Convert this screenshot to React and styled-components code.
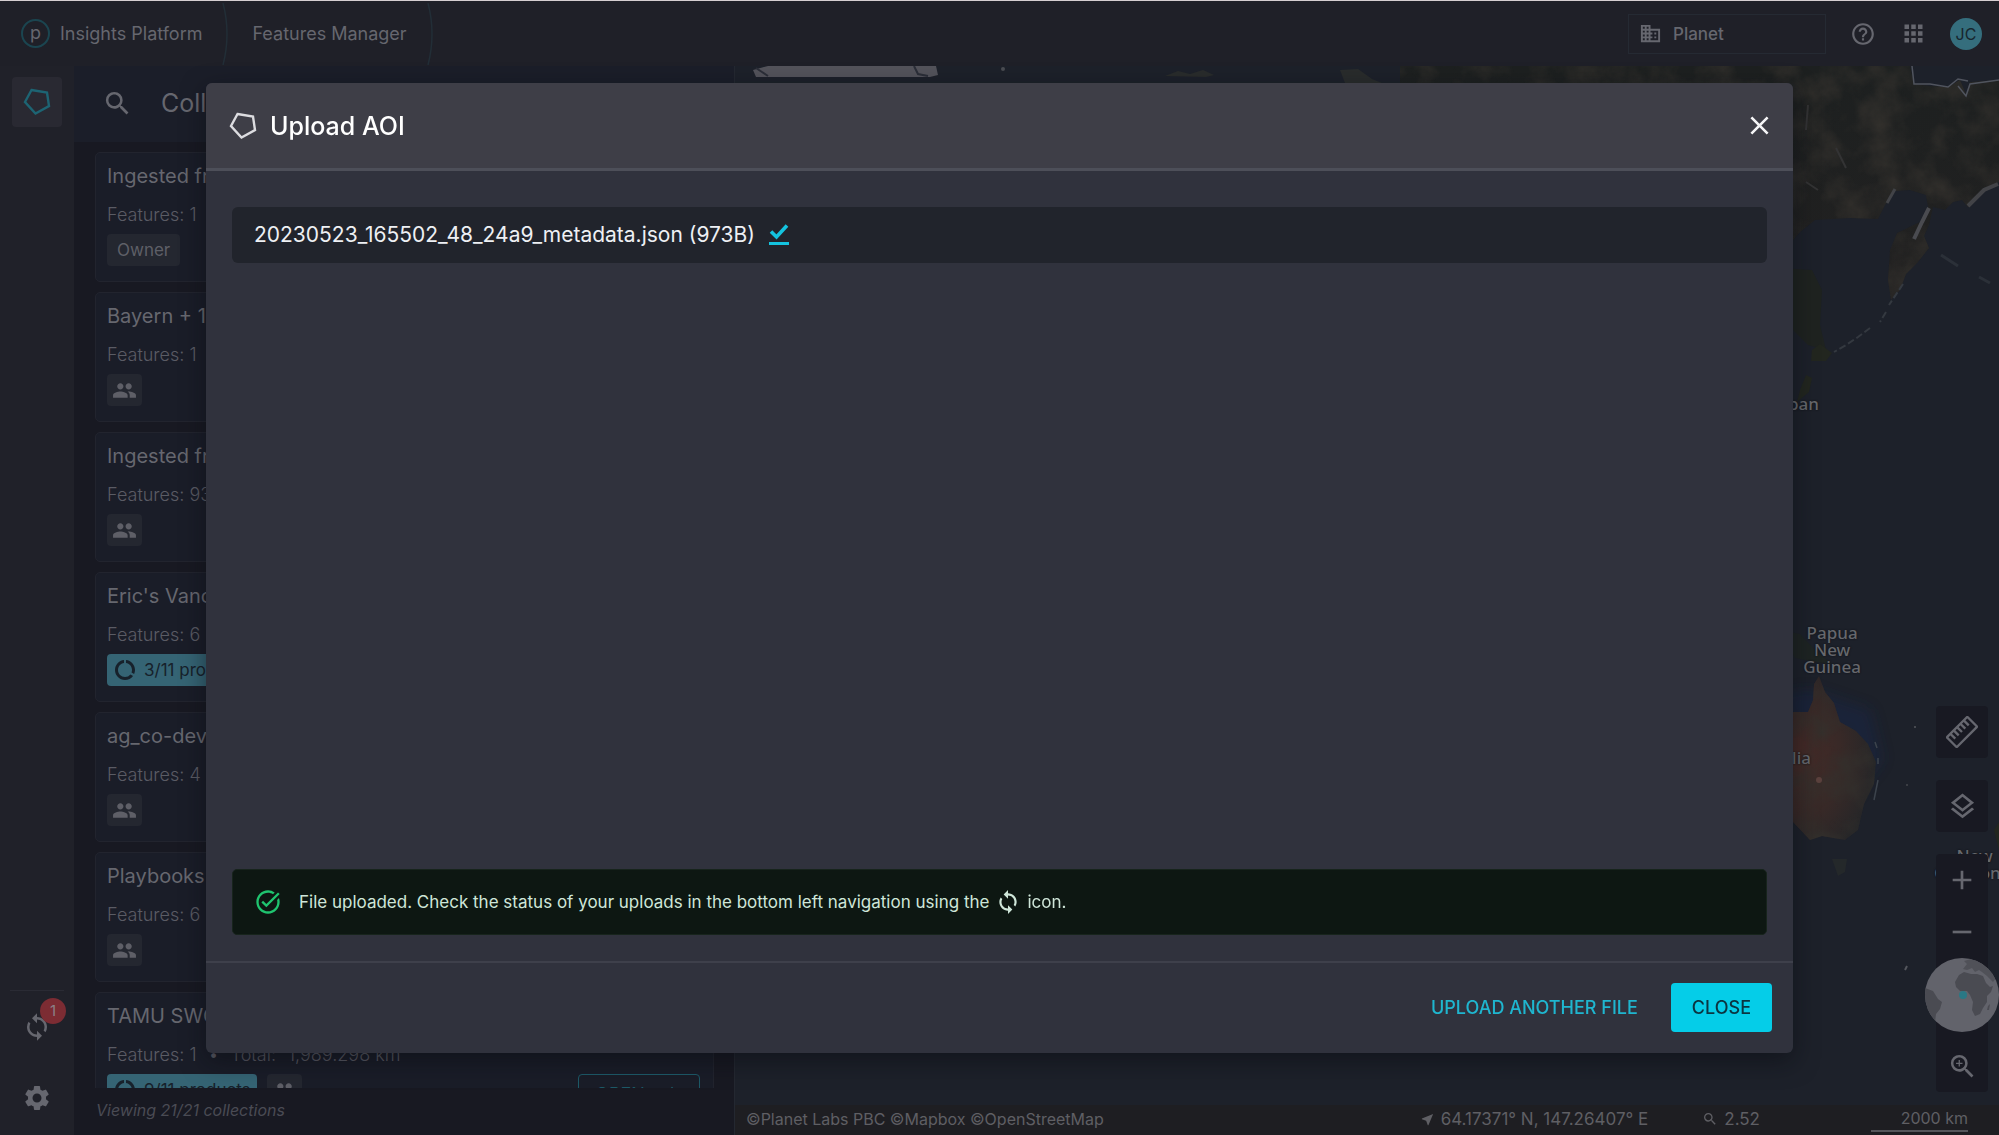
import React from "react";
import styled, { createGlobalStyle } from "styled-components";
import {
  MdAdd,
  MdApps,
  MdArrowForward,
  MdClose,
  MdDataUsage,
  MdDomain,
  MdHelpOutline,
  MdNearMe,
  MdOutlineLayers,
  MdPeople,
  MdRemove,
  MdSearch,
  MdSettings,
  MdSync,
  MdTaskAlt,
  MdZoomIn,
} from "react-icons/md";

const color = {
  bar: "#1f2028",
  rail: "#202129",
  panel: "#181922",
  card: "#1a1d28",
  cardBorder: "#22242e",
  chip: "#242730",
  muted: "#4a4b54",
  text: "#66676f",
  tealDim: "#1d5a68",
  tealChip: "#356474",
  ocean: "#1d212a",
  modal: "#30323d",
  modalHead: "#3e3e47",
  line: "#4d4f59",
  cyan: "#05cde8",
};

const GlobalStyle = createGlobalStyle`
  * {
    box-sizing: border-box;
  }
  body {
    margin: 0;
    background: ${color.panel};
    font-family: Inter, "Liberation Sans", sans-serif;
    color: ${color.text};
  }
  button {
    font-family: inherit;
    cursor: pointer;
  }
  h1, h2, p, ul {
    margin: 0;
    padding: 0;
    font-weight: 400;
  }
  svg {
    display: block;
    flex: none;
  }
`;

const Page = styled.div`
  display: flex;
  flex-direction: column;
  height: 100vh;
  overflow: hidden;
`;

/* top bar */

const TopBar = styled.header`
  display: flex;
  align-items: center;
  justify-content: space-between;
  height: 66px;
  flex: none;
  padding: 0 17px 0 21px;
  background: ${color.bar};
  border-top: 1px solid #d5ced1;
`;

const Group = styled.div`
  display: flex;
  align-items: center;
  gap: ${({ gap }) => gap || 0}px;
`;

const Logo = styled.span`
  display: flex;
  align-items: center;
  justify-content: center;
  width: 29px;
  height: 29px;
  margin-right: 10px;
  border: 2px solid #1b4550;
  border-radius: 50%;
  font-size: 18px;
  line-height: 20px;
  padding-bottom: 2px;
`;

const Crumb = styled.a`
  display: flex;
  align-items: center;
  font-size: 18px;
  line-height: 24px;
  color: ${color.text};
  text-decoration: none;
`;

const CrumbEdge = styled.svg`
  width: 8px;
  height: 62px;
  margin: 0 22px 0 20px;
`;

const OrgButton = styled.button`
  display: flex;
  align-items: center;
  gap: 11px;
  width: 198px;
  height: 40px;
  padding: 0 10px;
  border: 1px solid #252a33;
  background: none;
  color: ${color.text};
  font-size: 17px;
  font-weight: 500;
`;

const IconButton = styled.button`
  display: flex;
  align-items: center;
  justify-content: center;
  width: ${({ size }) => size || 26}px;
  height: ${({ size }) => size || 26}px;
  padding: 0;
  border: 0;
  border-radius: 4px;
  background: ${({ $active }) => ($active ? "#292932" : "none")};
  color: ${({ tone }) => tone || color.text};
`;

const Avatar = styled.button`
  width: 32px;
  height: 32px;
  padding: 0;
  border: 0;
  border-radius: 50%;
  background: #356e7d;
  color: #17262f;
  font-size: 16px;
`;

/* left rail */

const Main = styled.div`
  display: flex;
  flex: 1;
  min-height: 0;
`;

const Rail = styled.nav`
  display: flex;
  flex-direction: column;
  align-items: center;
  justify-content: space-between;
  width: 74px;
  flex: none;
  padding: 11px 0 22px;
  background: ${color.rail};
`;

const RailBottom = styled.div`
  display: flex;
  flex-direction: column;
  align-items: center;
  gap: 41px;
  width: 54px;
  padding-top: 21px;
  border-top: 1px solid #2a2b34;
`;

const SyncHolder = styled.div`
  position: relative;
`;

const Badge = styled.span`
  position: absolute;
  top: -14px;
  right: -14px;
  width: 26px;
  height: 26px;
  border-radius: 50%;
  background: #7c2c33;
  color: #8b8086;
  font-size: 15px;
  line-height: 26px;
  text-align: center;
`;

/* collections */

const Panel = styled.section`
  display: flex;
  flex-direction: column;
  width: 661px;
  flex: none;
  background: ${color.panel};
  border-right: 1px solid #242831;
`;

const PanelHead = styled.div`
  display: flex;
  align-items: center;
  gap: 28px;
  height: 76px;
  flex: none;
  padding: 0 14px 2px 28px;
  background: #1b1e29;
`;

const PanelTitle = styled.h1`
  flex: 1;
  font-size: 25px;
  line-height: 32px;
`;

const OutlineButton = styled.button`
  display: flex;
  align-items: center;
  justify-content: center;
  gap: 16px;
  width: 122px;
  height: 40px;
  border: 1px solid ${color.tealDim};
  border-radius: 4px;
  background: none;
  color: ${color.tealDim};
  font-size: 18px;
`;

const List = styled.ul`
  display: flex;
  flex-direction: column;
  gap: 10px;
  flex: 1;
  min-height: 0;
  overflow: hidden;
  padding: 10px 20px 0 21px;
  list-style: none;
`;

const Card = styled.li`
  flex: none;
  height: 130px;
  padding: 9px 13px 9px 11px;
  border: 1px solid ${color.cardBorder};
  border-radius: 5px;
  background: ${color.card};
`;

const CardTitle = styled.h2`
  font-size: 20px;
  line-height: 28px;
  white-space: nowrap;
`;

const CardMeta = styled.p`
  display: flex;
  gap: 12px;
  margin-top: 13px;
  font-size: 18px;
  font-weight: 300;
  line-height: 24px;
  color: #5a5b64;
`;

const CardRow = styled.div`
  display: flex;
  align-items: flex-start;
  gap: 10px;
  margin-top: 7px;
`;

const Chip = styled.span`
  display: flex;
  align-items: center;
  gap: 7px;
  height: 32px;
  padding: 0 ${({ $pad }) => $pad}px;
  border-radius: 4px;
  background: ${({ $teal }) => ($teal ? color.tealChip : color.chip)};
  color: ${({ $teal }) => ($teal ? "#17212b" : "#5e5f67")};
  font-size: 17px;
`;

const Spacer = styled.span`
  flex: 1;
`;

const PanelFoot = styled.p`
  height: 47px;
  flex: none;
  padding: 0 22px;
  color: ${color.muted};
  font-size: 16px;
  font-style: italic;
  line-height: 44px;
`;

/* map */

const MapArea = styled.section`
  position: relative;
  display: flex;
  flex-direction: column;
  flex: 1;
  min-width: 0;
  background: ${color.ocean};
`;

const MapCanvas = styled.div`
  flex: 1;
  min-height: 0;
  overflow: hidden;
`;

const MapLabel = styled.span`
  position: absolute;
  top: ${({ top }) => top}px;
  right: ${({ right }) => right}px;
  color: #66686d;
  font-family: "Noto Sans", sans-serif;
  font-size: 17px;
  font-weight: 500;
  line-height: 17px;
  text-align: center;
  text-shadow: 0 0 2px #0b0d12;
`;

const Controls = styled.div`
  position: absolute;
  right: 11px;
  bottom: 43px;
  display: flex;
  flex-direction: column;
  gap: 22px;
`;

const ControlBox = styled.div`
  display: flex;
  flex-direction: column;
  align-items: center;
  width: 52px;
  border-radius: 4px;
  background: #181922;
`;

const Globe = styled.svg`
  width: 74px;
  height: 74px;
  margin: 0 -11px 8px;
`;

const StatusBar = styled.footer`
  display: flex;
  align-items: center;
  height: 30px;
  flex: none;
  padding: 0 31px 2px 11px;
  background: #1e1e22;
  color: #5f5f64;
  font-size: 16px;
  line-height: 24px;
  white-space: nowrap;
`;

const Credits = styled.span`
  flex: 1;
`;

const Reading = styled.span`
  display: flex;
  align-items: center;
  gap: 6px;
  margin-right: ${({ $after }) => $after}px;
  font-size: 17px;
`;

const Scale = styled.span`
  width: 97px;
  border-bottom: 2px solid #55565b;
  text-align: right;
`;

/* dialog */

const Overlay = styled.div`
  position: fixed;
  inset: 0;
  display: flex;
  padding: 83px 206px 82px;
`;

const Dialog = styled.div`
  display: flex;
  flex-direction: column;
  flex: 1;
  overflow: hidden;
  border-radius: 6px;
  background: ${color.modal};
  box-shadow: 0 8px 24px rgba(8, 10, 16, 0.5);
`;

const DialogHead = styled.div`
  display: flex;
  align-items: center;
  gap: 13px;
  height: 88px;
  padding: 0 18px 0 23px;
  border-bottom: 3px solid ${color.line};
  background: ${color.modalHead};
  color: #fff;
`;

const DialogTitle = styled.h2`
  flex: 1;
  font-size: 25px;
  font-weight: 500;
  line-height: 32px;
`;

const DialogBody = styled.div`
  display: flex;
  flex-direction: column;
  justify-content: space-between;
  flex: 1;
  padding: 36px 26px 26px;
`;

const FileRow = styled.div`
  display: flex;
  align-items: center;
  gap: 14px;
  height: 56px;
  padding: 0 22px 2px;
  border-radius: 6px;
  background: #21242c;
  color: #eef0f4;
  font-size: 21px;
`;

const Notice = styled.div`
  display: flex;
  align-items: center;
  height: 66px;
  padding: 0 21px;
  border: 1px solid #17241c;
  border-radius: 5px;
  background: #0d1712;
  color: #cfe6d9;
  font-size: 17px;
  line-height: 24px;
`;

const NoticeText = styled.p`
  display: flex;
  align-items: center;
  gap: 6px;
  margin-left: 17px;
`;

const DialogFoot = styled.div`
  display: flex;
  align-items: center;
  justify-content: flex-end;
  gap: 12px;
  padding: 20px 21px 21px;
  border-top: 2px solid #3e404b;
`;

const Button = styled.button`
  height: 49px;
  padding: 0 21px;
  border: 0;
  border-radius: 4px;
  background: ${({ $primary }) => ($primary ? color.cyan : "none")};
  color: ${({ $primary }) => ($primary ? "#0b3541" : "#1fb6cf")};
  font-size: 18px;
  font-weight: 500;
`;

const collections = [
  { title: "Ingested from", features: "1", owner: true },
  { title: "Bayern + 1", features: "1" },
  { title: "Ingested from", features: "93" },
  { title: "Eric's Vancouver", features: "6", products: "3/11 products" },
  { title: "ag_co-dev", features: "4" },
  { title: "Playbooks", features: "6" },
  {
    title: "TAMU SWOT",
    features: "1",
    total: "1,989.298 km²",
    products: "9/11 products",
    shared: true,
    open: true,
  },
];

const Pentagon = ({ size = 28, stroke = "currentColor" }) => (
  <svg width={size} height={size} viewBox="0 0 28 28" fill="none">
    <path d="M8.500 2 24 4.500 26 18 12.500 25.500 2 14Z" stroke={stroke} strokeWidth="2.400" />
  </svg>
);

const DoneMark = () => (
  <svg width="20" height="24" viewBox="0 0 20 24" fill="none">
    <path d="M2 9.500 7.500 15 18 3.500" stroke="#14c3df" strokeWidth="3.600" />
    <path d="M0 21.500H20" stroke="#14c3df" strokeWidth="3" />
  </svg>
);

const Ruler = () => (
  <svg width="32" height="32" viewBox="0 0 32 32" fill="none">
    <g transform="rotate(-45 16 16)" stroke="currentColor" strokeWidth="2.400">
      <rect x="1.500" y="9" width="29" height="14" rx="1" />
      <path d="M6.500 9v7M11.300 9v7M16 9v7M20.700 9v7M25.500 9v7" />
    </g>
  </svg>
);

const Edge = () => (
  <CrumbEdge viewBox="0 0 8 62" fill="none">
    <path d="M1 0Q9 31 1 62" stroke="#222e37" strokeWidth="1.500" />
  </CrumbEdge>
);

const GlobeIcon = () => (
  <Globe viewBox="0 0 74 74">
    <defs>
      <clipPath id="globe">
        <circle cx="37" cy="37" r="37" />
      </clipPath>
    </defs>
    <g clipPath="url(#globe)">
      <rect width="74" height="74" fill="#62636b" />
      <path
        d="M0 30 8 33 13 41 17 44 15 51 11 56 10 64 0 62Z"
        fill="#4a4b52"
      />
      <path
        d="M34 17 39 14 46 16 52 16 58 18 61 25 65 29 68 28 66 34 62 38 62 44 58 50 55 56 50 58 47 52 48 44 45 37 42 33 35 33 31 29 30 24Z"
        fill="#4a4b52"
      />
      <path
        d="M38 11 42 6 39 3 46 1 56 4 65 11 71 20 68 24 62 18 57 14 54 12 50 14 47 10 42 12Z"
        fill="#505158"
      />
      <path d="M63 48 65 46 64 52 62 52Z" fill="#4a4b52" />
      <circle cx="38" cy="37" r="4" fill="#2a7885" />
    </g>
  </Globe>
);

const MapDrawing = () => (
  <svg
    width="100%"
    height="100%"
    viewBox="735 66 1264 1039"
    preserveAspectRatio="xMaxYMin slice"
  >
    <defs>
      <filter
        id="terrain"
        x="0"
        y="0"
        width="100%"
        height="100%"
        colorInterpolationFilters="sRGB"
      >
        <feTurbulence type="fractalNoise" baseFrequency="0.03" numOctaves="6" seed="8" />
        <feColorMatrix values="0 0 0 0 0.2  0 0 0 0 0.19  0 0 0 0 0.175  1.8 0 0 0 -0.65" />
        <feComposite in2="SourceGraphic" operator="in" result="grain" />
        <feMerge>
          <feMergeNode in="SourceGraphic" />
          <feMergeNode in="grain" />
        </feMerge>
      </filter>
      <filter id="soft" x="-30%" y="-30%" width="160%" height="160%">
        <feGaussianBlur stdDeviation="7" />
      </filter>
      <radialGradient id="outback" cx="0.35" cy="0.5" r="0.65">
        <stop offset="0" stopColor="#472a27" />
        <stop offset="0.55" stopColor="#382927" />
        <stop offset="1" stopColor="#252628" />
      </radialGradient>
      <linearGradient id="asia" x1="0" y1="0" x2="0" y2="1">
        <stop offset="0" stopColor="#1d2020" />
        <stop offset="1" stopColor="#222121" />
      </linearGradient>
    </defs>

    {/* northern ice and islands */}
    <path d="M753 70 768 66H936L938 75 930 77H770L756 77Z" fill="#53535b" />
    <path d="M756 68 768 76M914 66 918 74 928 76" stroke="#2b2e38" strokeWidth="2" fill="none" />
    <circle cx="1003" cy="69" r="2" fill="#4a4c52" />
    <path d="M1165 76 1178 71 1190 74 1203 70 1214 75 1206 77Z" fill="#292c2c" />
    <path d="M1340 70 1358 69 1372 79 1382 83H1345Z" fill="#292c2c" />

    {/* asia */}
    <g filter="url(#terrain)">
      <path
        d="M1400 66H1910L1914 84 1930 86 1948 87 1960 80 1966 94 1970 82 1999 80V182L1985 188 1978 198 1968 207 1962 200 1953 202 1945 210 1933 207 1929 225 1924 236 1929 248 1918 262 1906 274 1900 290 1891 300 1888 280 1890 250 1897 233 1920 222 1928 207 1926 195 1910 190 1895 191 1885 205 1878 219 1850 218 1815 220 1800 232 1793 240H1400Z"
        fill="url(#asia)"
      />
    </g>
    <path d="M1780 268 1812 270 1822 290 1820 325 1826 350 1808 345 1793 330Z" fill="#1f2320" />
    <path d="M1812 350 1820 344 1832 353 1826 361 1811 361Z" fill="#22261f" />
    <path d="M1806 375 1812 378 1809 392 1797 402 1800 390Z" fill="#22261f" />
    <path
      d="M1912 66 1914 84 1930 84 1948 87 1958 79 1968 81M1958 86 1966 96 1970 84 1999 80"
      stroke="#50545e"
      strokeWidth="1.500"
      fill="none"
    />
    <path d="M1929 208 1922 222 1914 239" stroke="#4a4b50" strokeWidth="4" fill="none" />
    <path d="M1998 184 1984 190 1968 206" stroke="#424347" strokeWidth="4" fill="none" />
    <path d="M1895 189 1887 203" stroke="#424347" strokeWidth="3" fill="none" />
    <path d="M1836 148 1846 168M1806 182 1818 190M1808 105 1806 130" stroke="#333334" strokeWidth="2" fill="none" />
    <path
      d="M1903 284 1889 305M1886 312 1880 322M1870 328 1858 337 1846 345 1834 352"
      stroke="#343940"
      strokeWidth="2"
      strokeDasharray="7 3"
      fill="none"
    />
    <path d="M1941 255 1958 266M1979 277 1990 283" stroke="#2b3038" strokeWidth="3" fill="none" />

    {/* australia and new guinea */}
    <path d="M1778 695 1810 690 1870 710 1882 760 1850 800Z" fill="#172750" opacity="0.4" filter="url(#soft)" />
    <g filter="url(#terrain)">
      <path
        d="M1760 712H1808L1813 700 1814 684 1819 676 1825 692 1834 703 1840 722 1856 731 1868 744 1876 762 1874 784 1864 804 1858 830 1845 840 1822 836 1810 840 1793 822H1760Z"
        fill="url(#outback)"
      />
    </g>
    <path d="M1832 859 1847 859 1845 872 1838 876Z" fill="#24282a" />
    <path d="M1780 630 1800 634 1815 650 1832 664 1815 662 1795 658Z" fill="#1e2423" />
    <path d="M1994 830 1999 822V850Z" fill="#22261f" />
    <circle cx="1819" cy="780" r="3" fill="#6a4a46" opacity="0.7" />
    <path d="M1875 742 1877 748M1878 758V764M1878 780 1874 800" stroke="#3c434c" strokeWidth="1.500" fill="none" />
    <circle cx="1915" cy="727" r="1" fill="#54575d" />
    <circle cx="1907" cy="785" r="1" fill="#44474d" />
    <path d="M1905 970 1907 966" stroke="#54575d" strokeWidth="2" />
  </svg>
);

const CollectionCard = ({ item }) => (
  <Card>
    <CardTitle>{item.title}</CardTitle>
    <CardMeta>
      <span>Features: {item.features}</span>
      {item.total && (
        <>
          <span>•</span>
          <span>Total:</span>
          <span>{item.total}</span>
        </>
      )}
    </CardMeta>
    <CardRow>
      {item.owner && <Chip $pad={10}>Owner</Chip>}
      {item.products && (
        <Chip $teal $pad={6}>
          <MdDataUsage size={24} />
          {item.products}
        </Chip>
      )}
      {!item.owner && (!item.products || item.shared) && (
        <Chip $pad={5}>
          <MdPeople size={25} />
        </Chip>
      )}
      <Spacer />
      {item.open && (
        <OutlineButton>
          OPEN <MdArrowForward size={22} />
        </OutlineButton>
      )}
    </CardRow>
  </Card>
);

const App = () => {
  return (
    <>
      <GlobalStyle />
      <Page>
        <TopBar>
          <Group>
            <Crumb href="#platform">
              <Logo>p</Logo>
              Insights Platform
            </Crumb>
            <Edge />
            <Crumb href="#features">Features Manager</Crumb>
            <Edge />
          </Group>
          <Group gap={24}>
            <OrgButton>
              <MdDomain size={23} />
              Planet
            </OrgButton>
            <IconButton aria-label="Help">
              <MdHelpOutline size={26} />
            </IconButton>
            <IconButton aria-label="Apps">
              <MdApps size={27} />
            </IconButton>
            <Avatar>JC</Avatar>
          </Group>
        </TopBar>

        <Main>
          <Rail>
            <IconButton size={50} $active aria-label="Features">
              <Pentagon stroke="#1d6473" />
            </IconButton>
            <RailBottom>
              <SyncHolder>
                <IconButton size={30} aria-label="Uploads">
                  <MdSync size={30} />
                </IconButton>
                <Badge>1</Badge>
              </SyncHolder>
              <IconButton size={30} aria-label="Settings">
                <MdSettings size={30} />
              </IconButton>
            </RailBottom>
          </Rail>

          <Panel>
            <PanelHead>
              <IconButton size={31} aria-label="Search">
                <MdSearch size={31} />
              </IconButton>
              <PanelTitle>Collections</PanelTitle>
              <OutlineButton aria-label="New collection">
                <MdAdd size={22} />
              </OutlineButton>
            </PanelHead>
            <List>
              {collections.map((item, i) => (
                <CollectionCard key={i} item={item} />
              ))}
            </List>
            <PanelFoot>Viewing 21/21 collections</PanelFoot>
          </Panel>

          <MapArea>
            <MapCanvas>
              <MapDrawing />
            </MapCanvas>
            <MapLabel top={329} right={180}>Japan</MapLabel>
            <MapLabel top={558} right={138}>
              Papua
              <br />
              New
              <br />
              Guinea
            </MapLabel>
            <MapLabel top={683} right={188}>Australia</MapLabel>
            <MapLabel top={781} right={-16}>
              New
              <br />
              Caledonia
            </MapLabel>
            <Controls>
              <ControlBox>
                <IconButton size={52} aria-label="Measure">
                  <Ruler />
                </IconButton>
              </ControlBox>
              <ControlBox>
                <IconButton size={52} aria-label="Layers">
                  <MdOutlineLayers size={31} />
                </IconButton>
              </ControlBox>
              <ControlBox>
                <IconButton size={52} aria-label="Zoom in">
                  <MdAdd size={32} />
                </IconButton>
                <IconButton size={52} aria-label="Zoom out">
                  <MdRemove size={32} />
                </IconButton>
                <GlobeIcon />
                <IconButton size={52} aria-label="Zoom to area">
                  <MdZoomIn size={31} />
                </IconButton>
              </ControlBox>
            </Controls>
            <StatusBar>
              <Credits>©Planet Labs PBC ©Mapbox ©OpenStreetMap</Credits>
              <Reading $after={54}>
                <MdNearMe size={15} />
                64.17371° N, 147.26407° E
              </Reading>
              <Reading $after={111}>
                <MdSearch size={16} />
                2.52
              </Reading>
              <Scale>2000 km</Scale>
            </StatusBar>
          </MapArea>
        </Main>
      </Page>

      <Overlay>
        <Dialog role="dialog" aria-labelledby="upload-title">
          <DialogHead>
            <Pentagon stroke="#dcdce0" />
            <DialogTitle id="upload-title">Upload AOI</DialogTitle>
            <IconButton size={32} tone="#f4f4f6" aria-label="Close dialog">
              <MdClose size={31} />
            </IconButton>
          </DialogHead>
          <DialogBody>
            <FileRow>
              <span>20230523_165502_48_24a9_metadata.json (973B)</span>
              <DoneMark />
            </FileRow>
            <Notice role="status">
              <MdTaskAlt size={28} color="#1fc46f" />
              <NoticeText>
                File uploaded. Check the status of your uploads in the bottom
                left navigation using the <MdSync size={26} /> icon.
              </NoticeText>
            </Notice>
          </DialogBody>
          <DialogFoot>
            <Button>UPLOAD ANOTHER FILE</Button>
            <Button $primary>CLOSE</Button>
          </DialogFoot>
        </Dialog>
      </Overlay>
    </>
  );
};

export default App;
